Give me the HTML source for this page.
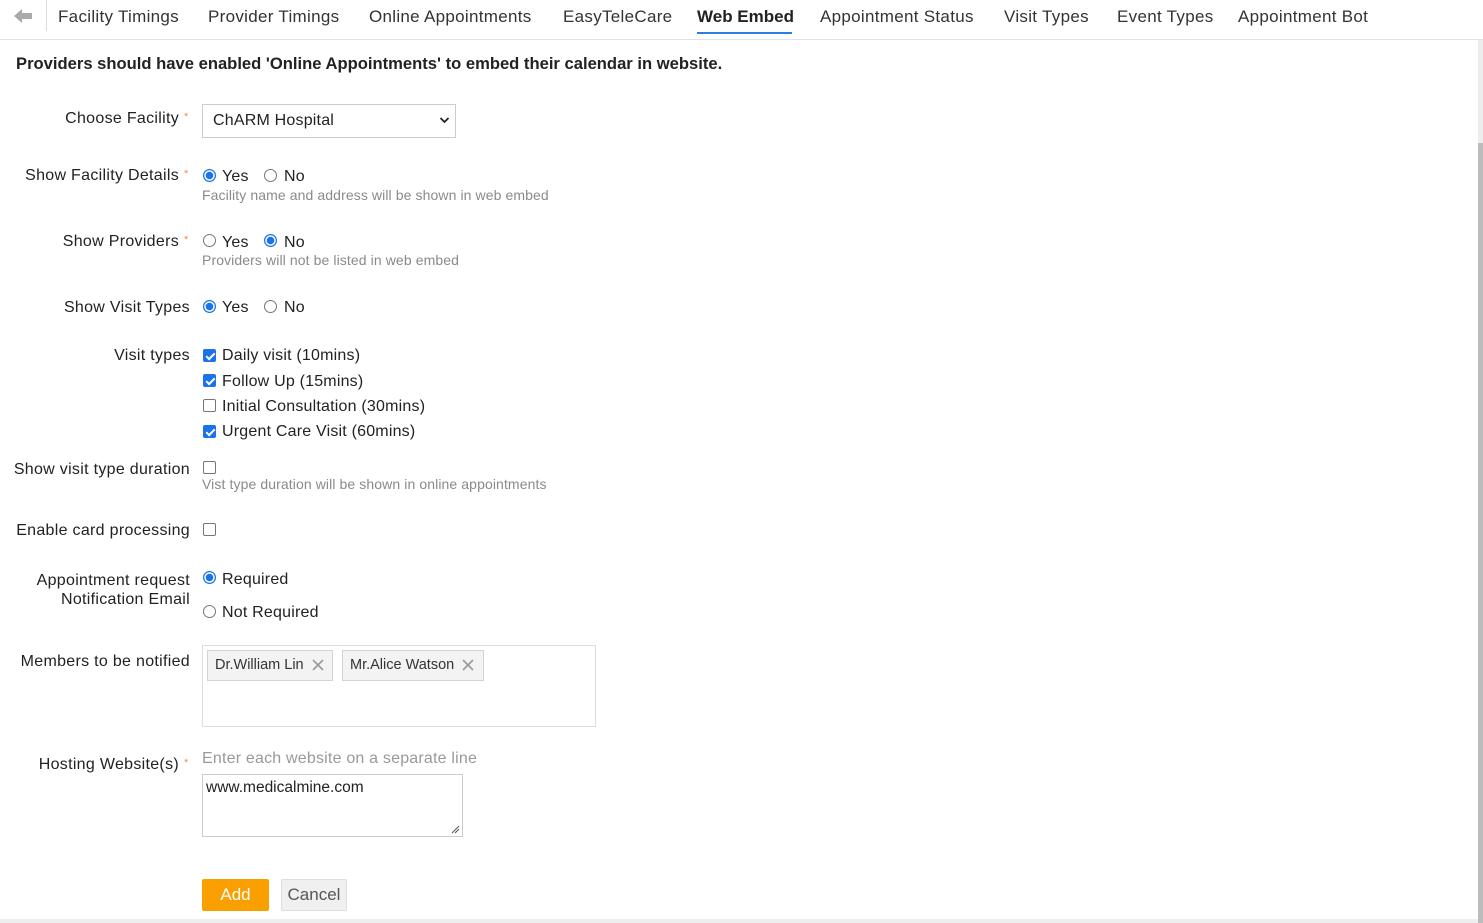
<!DOCTYPE html>
<html><head><meta charset="utf-8"><style>
*{box-sizing:border-box;margin:0;padding:0}
body{width:1483px;height:923px;position:relative;background:#fff;font-family:"Liberation Sans",sans-serif;color:#222;overflow:hidden}
.a{position:absolute;white-space:nowrap}
.tab{position:absolute;top:7px;font-size:17px;letter-spacing:0.3px;color:#333}
.lbl{position:absolute;right:1293px;font-size:16px;letter-spacing:0.3px;color:#222;text-align:right;white-space:nowrap}
.req{color:#f08a4b;font-size:11px;position:absolute;left:184px}
.t{position:absolute;font-size:16px;letter-spacing:0.2px;color:#222;white-space:nowrap}
.h{position:absolute;font-size:14px;letter-spacing:0.1px;color:#8a8a8a;white-space:nowrap}
.r{position:absolute;width:13px;height:13px;border:1px solid #767676;border-radius:50%;background:#fff}
.r.on{border:1px solid #1a73e8;background:radial-gradient(circle,#1a73e8 0 3.5px,#fff 4px 5px,#1a73e8 5.5px)}
.c{position:absolute;width:13px;height:13px;border:1px solid #767676;border-radius:2px;background:#fff}
.c.on{background:#1a73e8;border-color:#1a73e8}
.c.on:after{content:"";position:absolute;left:3.5px;top:0.5px;width:3px;height:7px;border:solid #fff;border-width:0 2px 2px 0;transform:rotate(45deg)}
</style></head><body>
<svg class="a" style="left:13px;top:8px" width="20" height="16" viewBox="0 0 20 16"><path d="M1 8 L9 1 V5 H19 V11 H9 V15 Z" fill="#aaa"/></svg>
<div class="a" style="left:46px;top:0;width:1px;height:31px;background:#ddd"></div>
<div class="tab" style="left:58px">Facility Timings</div>
<div class="tab" style="left:208px">Provider Timings</div>
<div class="tab" style="left:369px">Online Appointments</div>
<div class="tab" style="left:563px">EasyTeleCare</div>
<div class="tab" style="left:697px;color:#222;font-weight:bold;letter-spacing:0">Web Embed</div>
<div class="a" style="left:697px;top:32px;width:95px;height:2px;background:#2a7de1"></div>
<div class="tab" style="left:820px">Appointment Status</div>
<div class="tab" style="left:1004px">Visit Types</div>
<div class="tab" style="left:1117px">Event Types</div>
<div class="tab" style="left:1238px">Appointment Bot</div>
<div class="a" style="left:0;top:39px;width:1483px;height:1px;background:#e2e2e2"></div>
<div class="a" style="left:1478px;top:40px;width:5px;height:883px;background:#ededed"></div>
<div class="a" style="left:1478px;top:143px;width:5px;height:780px;background:#bcbcbc"></div>
<div class="a" style="left:0;top:919px;width:1478px;height:4px;background:#eee"></div>

<div class="a" style="left:16px;top:54px;font-size:16.6px;font-weight:bold;color:#222">Providers should have enabled 'Online Appointments' to embed their calendar in website.</div>

<div class="lbl" style="top:110px;right:1304px">Choose Facility</div><div class="req" style="top:111px">*</div>
<div class="a" style="left:202px;top:104px;width:254px;height:34px;border:1px solid #ccc"></div>
<div class="t" style="left:213px;top:112px">ChARM Hospital</div>
<svg class="a" style="left:439px;top:116px" width="11" height="8" viewBox="0 0 11 8"><path d="M1.5 2 L5.5 6 L9.5 2" stroke="#222" stroke-width="1.8" fill="none"/></svg>

<div class="lbl" style="top:167px;right:1304px">Show Facility Details</div><div class="req" style="top:168px">*</div>
<div class="r on" style="left:203px;top:169px"></div><div class="t" style="left:222px;top:168px">Yes</div>
<div class="r" style="left:264px;top:169px"></div><div class="t" style="left:284px;top:168px">No</div>
<div class="h" style="left:202px;top:187px">Facility name and address will be shown in web embed</div>

<div class="lbl" style="top:233px;right:1304px">Show Providers</div><div class="req" style="top:234px">*</div>
<div class="r" style="left:203px;top:234px"></div><div class="t" style="left:222px;top:234px">Yes</div>
<div class="r on" style="left:264px;top:234px"></div><div class="t" style="left:284px;top:234px">No</div>
<div class="h" style="left:202px;top:252px">Providers will not be listed in web embed</div>

<div class="lbl" style="top:299px">Show Visit Types</div>
<div class="r on" style="left:203px;top:300px"></div><div class="t" style="left:222px;top:299px">Yes</div>
<div class="r" style="left:264px;top:300px"></div><div class="t" style="left:284px;top:299px">No</div>

<div class="lbl" style="top:347px">Visit types</div>
<div class="c on" style="left:203px;top:349px"></div><div class="t" style="left:222px;top:347px">Daily visit (10mins)</div>
<div class="c on" style="left:203px;top:374px"></div><div class="t" style="left:222px;top:373px">Follow Up (15mins)</div>
<div class="c" style="left:203px;top:399px"></div><div class="t" style="left:222px;top:398px">Initial Consultation (30mins)</div>
<div class="c on" style="left:203px;top:425px"></div><div class="t" style="left:222px;top:423px">Urgent Care Visit (60mins)</div>

<div class="lbl" style="top:461px">Show visit type duration</div>
<div class="c" style="left:203px;top:461px"></div>
<div class="h" style="left:202px;top:476px">Vist type duration will be shown in online appointments</div>

<div class="lbl" style="top:522px">Enable card processing</div>
<div class="c" style="left:203px;top:523px"></div>

<div class="lbl" style="top:571px;line-height:19px">Appointment request<br>Notification Email</div>
<div class="r on" style="left:203px;top:571px"></div><div class="t" style="left:222px;top:571px">Required</div>
<div class="r" style="left:203px;top:605px"></div><div class="t" style="left:222px;top:604px">Not Required</div>

<div class="lbl" style="top:653px">Members to be notified</div>
<div class="a" style="left:202px;top:645px;width:394px;height:82px;border:1px solid #ddd"></div>
<div class="a" style="left:207px;top:650px;width:126px;height:31px;border:1px solid #d4d4d4;background:#f3f3f3"></div>
<div class="a" style="left:215px;top:657px;font-size:14.5px;color:#333">Dr.William Lin</div>
<svg class="a" style="left:312px;top:659px" width="12" height="12"><path d="M1 1L11 11M11 1L1 11" stroke="#999" stroke-width="1.6"/></svg>
<div class="a" style="left:342px;top:650px;width:142px;height:31px;border:1px solid #d4d4d4;background:#f3f3f3"></div>
<div class="a" style="left:350px;top:657px;font-size:14.5px;color:#333">Mr.Alice Watson</div>
<svg class="a" style="left:462px;top:659px" width="12" height="12"><path d="M1 1L11 11M11 1L1 11" stroke="#999" stroke-width="1.6"/></svg>

<div class="lbl" style="top:756px;right:1304px">Hosting Website(s)</div><div class="req" style="top:757px">*</div>
<div class="a" style="left:202px;top:750px;font-size:16px;letter-spacing:0.2px;color:#999">Enter each website on a separate line</div>
<div class="a" style="left:202px;top:774px;width:261px;height:63px;border:1px solid #ccc"></div>
<div class="a" style="left:206px;top:779px;font-size:15.5px;color:#222">www.medicalmine.com</div>
<svg class="a" style="left:451px;top:825px" width="9" height="9"><path d="M1 8L8 1M4 8L8 4" stroke="#555" stroke-width="1"/></svg>

<div class="a" style="left:202px;top:879px;width:67px;height:32px;background:#f9a000;border-radius:2px;color:#fff;font-size:17px;text-align:center;line-height:32px">Add</div>
<div class="a" style="left:281px;top:879px;width:66px;height:32px;background:#f0f0f0;border:1px solid #ddd;border-radius:2px;color:#555;font-size:17px;text-align:center;line-height:30px">Cancel</div>
</body></html>
